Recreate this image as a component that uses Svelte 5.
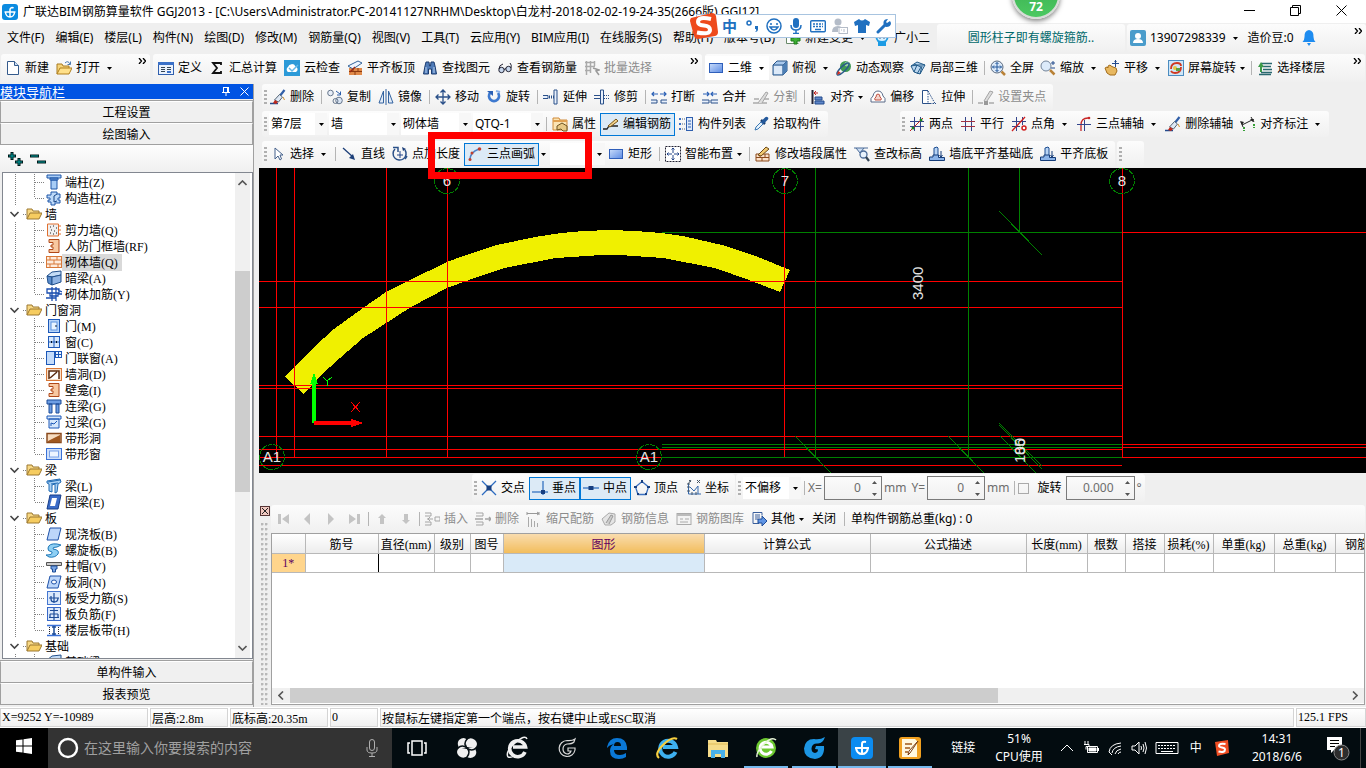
<script lang="ts">
  // 16x16 glyphs for toolbars and the component tree
  const icons: Record<string, string> = {
    app: '<rect width="16" height="16" rx="3" fill="#0b8be0"/><path d="M8 13V5.500a2 2 0 0 1 3.500-1.200M2.500 8h11M3.500 8a4.500 5 0 0 0 9 0" fill="none" stroke="#fff" stroke-width="1.500"/>',
    new: '<path d="M2.500 1.500h7l4 4v9h-11z" fill="#fff" stroke="#345a8c"/><path d="M9.500 1.500v4h4" fill="#cfe0f5" stroke="#345a8c"/>',
    open: '<path d="M1 14V4h5l1 2h6v3" fill="#f6d47a" stroke="#a87a20"/><path d="M1 14l3-6h12l-3 6z" fill="#ffe08a" stroke="#b07f1c"/><path d="M9 3q3-3 5 1M14.500 1.500V4.500H11.500" fill="none" stroke="#4878b0"/>',
    define: '<rect x=".5" y="2.500" width="15" height="12" fill="#eaf1fc" stroke="#2f5fae"/><path d="M0 2h16v3H0z" fill="#3a70c8"/><path d="M3 7.500h4M3 9.500h4M3 11.500h4M9 7.500h4M9 9.500h4" stroke="#345"/><path d="M9 11h4v2H9z" fill="#3a70c8"/>',
    sigma: '<path d="M12 5V3H4l4 5-4 5h8v-2" fill="none" stroke="#111" stroke-width="1.800"/>',
    cloud: '<rect width="16" height="16" fill="#2c9ad8"/><path d="M4 12a3 3 0 0 1 0-5 4 4 0 0 1 7.500-.5A3 3 0 0 1 12 12z" fill="#fff"/><path d="M5 8l3 3 6-6" fill="none" stroke="#63b8e8" stroke-width="1.500"/>',
    slabtop: '<path d="M2 8h13v7H2z" fill="#e08a4a"/><path d="M2 11.500h13M6 8v3M11 8v3M8 12v3" stroke="#8b3a10"/><path d="M1 6l10-5 4 2-9 6z" fill="#eef5ff" stroke="#32649b"/><path d="M3 12l5-5" stroke="#a02810" stroke-width="1.500"/>',
    find: '<path d="M3 6l1-4h3l.5 4h1L9 2h3l1 4 1.500 8h-5V9h-3v5h-5z" fill="#4f7bb8" stroke="#1c3c70"/><path d="M4 7v6M12 7v6" stroke="#b9d2f0"/>',
    glasses: '<circle cx="4.500" cy="10" r="2.700" fill="#c8d8ee" stroke="#223"/><circle cx="11.500" cy="9" r="2.700" fill="#c8d8ee" stroke="#223"/><path d="M7 9.500l2-1M2 9q0-4 4-5M14 8q1-3-1-5" fill="none" stroke="#223"/>',
    batch: '<path d="M1 2.500h9M1 6.500h10M1 10.500h6M2.500 1v14M6.500 1v12M10.500 1v5" stroke="#aaa" stroke-width="1.500"/><path d="M9 8l6 2-3 1 3 4" fill="none" stroke="#999" stroke-width="1.500"/>',
    rect: '<defs><linearGradient id="rg" x1="0" y1="0" x2="1" y2="1"><stop offset="0" stop-color="#c9dcfa"/><stop offset="1" stop-color="#5b8be4"/></linearGradient></defs><rect x="1.500" y="3.500" width="13" height="9" fill="url(#rg)" stroke="#2f5fba"/>',
    cube: '<path d="M1 5l4-4h10v10l-4 4H1z" fill="#a8c8ec" stroke="#2a5688"/><path d="M1 5h10v10M11 5l4-4" fill="none" stroke="#2a5688"/><path d="M11 5l4-4v10l-4 4z" fill="#4d7fb5"/><path d="M2 6h8v8H2z" fill="#dce9f8"/>',
    orbit: '<circle cx="9.500" cy="6.500" r="5.500" fill="#3f9a54"/><circle cx="11" cy="4" r="2.500" fill="#9ad6a0"/><ellipse cx="7" cy="9" rx="8" ry="2.500" transform="rotate(-45 7 9)" fill="none" stroke="#2a5c8c" stroke-width="1.500"/><path d="M1 15l1-4 3 2z" fill="#d83020"/>',
    local3d: '<path d="M1 6l6-4 8 3-5 9-6-2z" fill="#bcd7ef" stroke="#225a88"/><path d="M4 12l3-7 8 0M10 14l2-8M1 6l6-1M4 4l7 3-4 7" fill="none" stroke="#225a88"/>',
    fit: '<circle cx="7" cy="7" r="6" fill="#dceafa" stroke="#5a6a80"/><path d="M7 2.500v9M2.500 7h9M5.500 4L7 2.500 8.500 4M5.500 10L7 11.500 8.500 10M4 5.500L2.500 7 4 8.500M10 5.500L11.500 7 10 8.500" fill="none" stroke="#24599c"/><path d="M11.500 11.500l3.500 3.500" stroke="#b98238" stroke-width="2.500"/>',
    zoom: '<circle cx="6" cy="6" r="5" fill="#dceafa" stroke="#73849a"/><path d="M10 10l4.500 4.500" stroke="#b98238" stroke-width="2.500"/><path d="M11 3h4M13 1v4M11 8h4" stroke="#234a8c"/>',
    pan: '<path d="M1 8l2-1 1 1V6l2-1 1 1 2 1 3 1 1 3-2 4H6L3 13z" fill="#e8b860" stroke="#a36d1c"/><path d="M11.500 0v7M8 3.500h7M10.500 1.500l1-1 1 1" stroke="#234a8c"/>',
    screenrot: '<rect x=".5" y=".5" width="15" height="15" fill="#cfe6f8" stroke="#4b8cc0"/><path d="M3 9q0-6 6-6 4 0 4 3M13 7q0 6-6 6-3 0-4-2" fill="none" stroke="#d03820" stroke-width="1.800"/><circle cx="7" cy="8" r="2" fill="#e8c840"/><path d="M8 8h4v3H8z" fill="#5fa040"/>',
    floors: '<path d="M4 3.500h11M4 6.500h10M6 9.500h9M4 12.500h11M2 14.500h12" stroke="#2a6870" stroke-width="1.500"/><path d="M1 7l3-5 3 5H5v5H3V7z" fill="#3b9a48"/>',
    erase: '<path d="M0 14.500h8" stroke="#234a8c" stroke-width="1.500"/><path d="M14.500 1L9 8" stroke="#315fa8" stroke-width="2.200"/><path d="M9.500 5.500l3 2.500-4 5-4-2z" fill="#dfe8f4" stroke="#567"/><path d="M5 11l3 2-2 2-3-1z" fill="#c0281c"/><path d="M13 8l1.500 3" stroke="#d09030"/>',
    copy: '<circle cx="3.500" cy="4" r="2.800" fill="#e8eef8" stroke="#66768c"/><circle cx="12" cy="11.500" r="3.300" fill="#dbe6f4" stroke="#66768c"/><circle cx="8.500" cy="12" r="2.500" fill="none" stroke="#66768c"/><path d="M9 2l4 3M13.500 2.500V6H10" fill="none" stroke="#2b5ca8"/>',
    mirror: '<path d="M5.500 2v12H1zM10.500 2v12H15z" fill="#e3ecf8" stroke="#3363a0"/><path d="M8 0v16" stroke="#3363a0"/>',
    move: '<path d="M8 1v14M1 8h14M5.500 3.500L8 1l2.500 2.500M5.500 12.500L8 15l2.500-2.500M3.500 5.500L1 8l2.500 2.500M12.500 5.500L15 8l-2.500 2.500" fill="none" stroke="#2a5089" stroke-width="1.300"/>',
    rotate: '<path d="M4 4a5 5 0 1 0 8 0" fill="none" stroke="#3e79cf" stroke-width="2.800"/><path d="M1 2h6v5z" fill="#2b60b5"/><path d="M10 2l4 1" stroke="#8ab0e8" stroke-width="2"/>',
    extend: '<path d="M0 6.500h5v3H0M11 1h3v14h-3z" fill="#e8f0fc" stroke="#2a5089"/><path d="M6 8h5" stroke="#2a5089" stroke-dasharray="1 1" stroke-width="3"/>',
    trim: '<path d="M6.500 1h3v14h-3z" fill="#e8f0fc" stroke="#2a5089"/><path d="M0 6.500h6M0 9.500h6" stroke="#2a5089"/><path d="M10 6.500h6M10 9.500h6" stroke="#2a5089" stroke-dasharray="1 1"/>',
    break: '<path d="M0 11h6v3H0M16 11h-6v3h6" fill="#e8f0fc" stroke="#2a5089"/><path d="M1 5h6M3 3L1 5l2 2M9 5h6M13 3l2 2-2 2" fill="none" stroke="#2b60b5" stroke-width="1.200"/>',
    merge: '<path d="M0 11h7v3H0M16 11H9v3h7" fill="#e8f0fc" stroke="#2a5089"/><path d="M1 5h6M5 3l2 2-2 2M9 5h6M11 3L9 5l2 2" fill="none" stroke="#2b60b5" stroke-width="1.200"/>',
    split: '<path d="M1 10h5M10 10h6M0 14h14" stroke="#aaa" stroke-width="1.500"/><path d="M5 14l8-11 2 1-6 10" fill="#ddd" stroke="#a5a5a5"/>',
    align: '<path d="M2.500 1v14" stroke="#223" stroke-width="2"/><path d="M4 4h4M6 2L4 4l2 2" fill="none" stroke="#c02020"/><path d="M5 8h7v3H5zM5 12h9v3H5z" fill="#5f86c8" stroke="#234a8c"/>',
    offset: '<path d="M1 13q-1-4 2-6 1-5 5-5t5 5q3 2 2 6z" fill="#fff" stroke="#5a6b88"/><path d="M5 11q-1-2 1-3 0-3 2-3t2 3q2 1 1 3z" fill="#f4d4cc" stroke="#c05040"/>',
    stretch: '<path d="M7 1.500H1.500v13h8" fill="#fff" stroke="#2a5089"/><path d="M7 2l7 12.500M7 2v12M9 14.500h6" fill="none" stroke="#2a5089" stroke-dasharray="1.500 1"/>',
    clamp: '<path d="M0 14h5M11 14h5" stroke="#aaa" stroke-width="1.500"/><path d="M6 12L12 2l3 1-6 9" fill="#ddd" stroke="#a5a5a5"/><path d="M6 12h4v4H6z" fill="#999"/>',
    props: '<path d="M1 2h6l1 2h7v10H1z" fill="#fbe4b4" stroke="#d08a38"/><path d="M1 5h14" stroke="#e0a050" stroke-width="2"/><path d="M5 10l5-3 5 3v5h-4l-2-2-4 1z" fill="#e8c884" stroke="#6d5320"/>',
    editbar: '<path d="M0 13h4l2-3h9" fill="none" stroke="#222" stroke-width="1.300"/><path d="M5 10l8-7 2 2-8 6z" fill="#f2d28c" stroke="#775518"/>',
    list: '<path d="M1 2h2v2H1zM1 7h2v2H1zM1 12h2v2H1z" fill="#3a70c8"/><path d="M4 3h3M4 8h3M4 13h3" stroke="#567" stroke-dasharray="1 1"/><rect x="8.500" y="1.500" width="6" height="13" fill="#dfeafa" stroke="#2f5fae"/><path d="M10 5h3M10 8h3M10 11h3" stroke="#2f5fae"/>',
    pick: '<path d="M2 14l1-3 6-6 2 2-6 6z" fill="#e6f2fc" stroke="#3b78b4"/><path d="M8 4l4 4" stroke="#173a68" stroke-width="2.500"/><path d="M10 6l3.500-3.500" stroke="#24599c" stroke-width="3.500" stroke-linecap="round"/>',
    twopt: '<path d="M5.500 1v14M11.500 1v14M1 5.500h14M1 10.500h14" stroke="#33458c"/><path d="M1 15L14 2" stroke="#c02020"/><circle cx="4" cy="12" r="1.500" fill="#208020"/><circle cx="12" cy="4" r="1.500" fill="#208020"/>',
    parallel: '<path d="M5.500 1v14M11.500 1v14" stroke="#33458c"/><path d="M1 5.500h14M1 10.500h14" stroke="#a03040"/>',
    ptangle: '<path d="M5.500 1v14M11.500 1v8M1 5.500h14M1 10.500h8" stroke="#33458c"/><path d="M1 15L14 1" stroke="#d02020" stroke-width="1.300"/><circle cx="13" cy="12" r="2" fill="#fff" stroke="#d02020" stroke-width="1.500"/>',
    arcaxis: '<path d="M5 15V9q0-7 7-7" fill="none" stroke="#c82828" stroke-width="1.300"/><path d="M8.500 4v11M1 8.500h14" stroke="#33458c"/><circle cx="13" cy="2" r="1.300" fill="#c82828"/>',
    dim: '<path d="M2 9l10-5M1 6l2 5M11 1l3 5" fill="none" stroke="#222"/><path d="M0 5l4 1-2 3zM10 3l4 0-1 3z" fill="#222"/><path d="M4 11v4M14 8v4" stroke="#38a038" stroke-width="2" stroke-dasharray="2 1"/>',
    cursor: '<path d="M5 2v11l3-3 2 4 1.500-1L10 9h3z" fill="#fff" stroke="#45618c"/>',
    line: '<path d="M2 2l10 9" stroke="#1d3f78" stroke-width="1.300"/><path d="M14 14l-6-2 4-4z" fill="#1d3f78"/>',
    ptlen: '<path d="M3 3a6.500 6.500 0 1 0 10 1" fill="none" stroke="#2a5089" stroke-width="1.500"/><path d="M1 1.500h5V6M13 13l2-3" fill="none" stroke="#2a5089" stroke-width="1.500"/><path d="M8 5v7M5 9h6" stroke="#24468a"/><path d="M10 1l4 2-3 2z" fill="#1d3f78"/>',
    arc3: '<path d="M3 14Q3 6 12 3" fill="none" stroke="#4d82c8" stroke-width="1.600"/><circle cx="3" cy="13.500" r="1.500" fill="#c04030"/><circle cx="5" cy="7" r="1.500" fill="#c04030"/><circle cx="12.500" cy="3" r="1.800" fill="#c04030"/>',
    smart: '<rect x=".5" y=".5" width="15" height="15" fill="#fff" stroke="#223" stroke-dasharray="2 1"/><path d="M8 2v5M8 9v5M2 8h5M9 8h5M6.500 3.500L8 2l1.500 1.500M6.500 12.500L8 14l1.500-1.500M3.500 6.500L2 8l1.500 1.500M12.500 6.500L14 8l-1.500 1.500" fill="none" stroke="#24468a"/>',
    modwall: '<path d="M1 8h13v7H1z" fill="#fbe0c8" stroke="#8c4a1c"/><path d="M1 11.500h13M5 8v3M10 8v3M7 12v3" stroke="#8c4a1c"/><path d="M3 9L11 1l3 2-8 7z" fill="#f0c870" stroke="#6f4a18"/>',
    checkh: '<path d="M0 2h14M2 2l4 5 4-5" fill="#cfe0f5" stroke="#4b6b98"/><circle cx="9.500" cy="8.500" r="3.500" fill="#e8f2fc" stroke="#4b6b98" stroke-width="1.300"/><path d="M12 11l3 4" stroke="#345" stroke-width="2.200"/>',
    wallbase: '<path d="M5 2l3-1 1 1v8H5z" fill="#b8d4f4" stroke="#1c4c90"/><path d="M.5 14.500h15v-3h-6V9H4v2H.5z" fill="#8cb4e8" stroke="#153c78"/><path d="M12 5v6M10.500 9L12 11l1.500-2" fill="none" stroke="#153c78"/>',
    cross: '<path d="M1 1l14 14M15 1L1 15" stroke="#2d6cc0" stroke-width="1.300"/><path d="M5.500 5.500h5v5h-5z" fill="#173f80"/>',
    perp: '<path d="M0 12h16M11 1v14" stroke="#4b82c8" stroke-width="1.500"/><path d="M9 10h4v4H9z" fill="#173f80"/>',
    mid: '<path d="M0 8h16" stroke="#4b82c8" stroke-width="1.500"/><path d="M5.500 6h5v4h-5z" fill="#173f80"/>',
    vertex: '<path d="M8 1.500L14.500 7l-2.500 7.500H4L1.500 7z" fill="none" stroke="#3a70c0" stroke-width="1.300"/><path d="M7 0h2v3H7zM0 6h3v2H0zM13 6h3v2h-3zM3 13h2v2H3zM11 13h2v2h-2z" fill="#173f80"/>',
    coord: '<path d="M3.500 4v10H16M5 7l4 4 4-5v8" fill="none" stroke="#3468ac"/><path d="M2 4h3M2 7h3M2 11h3M7 12v3M11 12v3M4 0l2 2M6 0L3 4M12 0l3 3M15 0l-3 3" fill="none" stroke="#456"/>',
    first: '<path d="M3 3h3v10H3zM14 3v10L7 8z" fill="#c4c4c4"/>',
    prev: '<path d="M11 2v12L5 8z" fill="#c4c4c4"/>',
    next: '<path d="M5 2v12l6-6z" fill="#c4c4c4"/>',
    last: '<path d="M10 3h3v10h-3zM2 3v10l7-5z" fill="#c4c4c4"/>',
    up: '<path d="M8 3l4 4h-2v6H6V7H4z" fill="#c4c4c4"/>',
    down: '<path d="M8 13l4-4h-2V3H6v6H4z" fill="#c4c4c4"/>',
    insert: '<path d="M1 2h6v3H1M1 11h6v3H1" fill="none" stroke="#a5a5a5"/><path d="M3 8h6M11 6h5v4h-5zM6 6L4 8l2 2" fill="none" stroke="#a5a5a5"/>',
    remove: '<path d="M1 2h7v3H1M1 11h7v3H1" fill="none" stroke="#a5a5a5"/><path d="M0 8h8M10 8h6M14 6l2 2-2 2" fill="none" stroke="#a5a5a5" stroke-width="1.500"/>',
    scale: '<path d="M1 1v3M1 2.500h12M13 1v3M11 1l2 1.500L11 4" fill="none" stroke="#999"/><path d="M2.500 6v10M5.500 8v8M8.500 10v6M11.500 12v4" stroke="#aaa"/>',
    info: '<path d="M1 8l7-6 6 1v8l-4 3H4z" fill="#e4e4e4" stroke="#aaa"/><path d="M5 12l5-8 2 1-4 8" fill="#ccc" stroke="#999"/>',
    lib: '<rect x="1" y="2.500" width="14" height="11" fill="#f3f3f3" stroke="#aaa"/><path d="M1 4h14" stroke="#bbb" stroke-width="2"/><path d="M4 8h3M4 11h8M9 8h4" stroke="#aaa"/>',
    other: '<path d="M2 1.500h9v3M2 1.500v11h6" fill="none" stroke="#3a5f9c"/><path d="M4 4h5M4 6h5M4 8h3" stroke="#3a5f9c"/><path d="M7 8h4V5l5 5-5 5v-3H7z" fill="#5f94e4" stroke="#1f4c98"/>',
    newchg: '<path d="M4 3.500H1.500v10h12" fill="#fff" stroke="#6a8a6a"/><path d="M9 5h3v3h3v3h-3v3H9v-3H6V8h3z" fill="#3cb034" stroke="#1c7a18"/>',
    robot: '<circle cx="8" cy="7" r="6.500" fill="#1c9be4"/><path d="M4 12h8v4H4z" fill="#1c9be4"/><ellipse cx="8" cy="8" rx="4.500" ry="3" fill="#d6f0ff"/><path d="M5.500 8h1M9.500 8h1" stroke="#136" stroke-width="1.500"/>',
    user: '<rect width="16" height="16" rx="2" fill="#4a9ccb"/><circle cx="8" cy="6" r="3" fill="#fff"/><path d="M3 13q0-4 5-4t5 4z" fill="#fff"/>',
    bell: '<path d="M8 0q5 1 4.500 7 0 3 2 5h-13q2-2 2-5Q3 1 8 0z" fill="#1e8cf0"/><path d="M6 13h4l-2 3z" fill="#1e8cf0"/>',
    folder: '<path d="M1 13V3h5l1 2h6v3" fill="#f8d884" stroke="#9c7830"/><path d="M1 13l3-6h12l-3 6z" fill="#f6cc60" stroke="#9c7830"/>',
    column: '<path d="M1 1h14v3H1zM4 4h8v2H4zM5 6h6v9H5z" fill="#a8cdf6" stroke="#1e56a8"/>',
    tiecol: '<path d="M5 2h6v2h3v4h-2v2h2v3H9v2H5v-3H2v-2h2V8H1V5h4z" fill="#bcd8f8" stroke="#1e56a8"/><path d="M11 4l-3 2v6l3-1" fill="none" stroke="#174484"/>',
    shear: '<path d="M1.500 2h11v12h-11z" fill="#f0f0f0" stroke="#e07030"/><path d="M4 5h1M7 4h1M10 6h1M5 8h1M8 9h1M4 11h1M7 12h1M10 11h1" stroke="#222"/><path d="M12 4h3M12 8h3M12 12h3" stroke="#e07030"/>',
    niche: '<path d="M3 1.500h10v13H3v-3h4V9H5V7h2V4.500H3z" fill="#f8c8a0" stroke="#b04818"/>',
    brick: '<rect x=".5" y="2.500" width="15" height="11" fill="#fdebdc" stroke="#d87838"/><path d="M0 6h16M0 10h16M4 2v4M11 2v4M8 6v4M4 10v4M12 10v4" stroke="#d87838"/>',
    hiddenbeam: '<path d="M1 6l5-4 9-1v4l-9 2z" fill="#c4dcf6" stroke="#21508c"/><path d="M1 6l5 1v8l-4-2z" fill="#5a8ccc" stroke="#21508c"/><path d="M6 7l9-2v7l-9 3z" fill="#8fb4e4" stroke="#21508c"/>',
    rebar: '<path d="M1 3h12v4H1zM4 7h8v3H4zM6 1v14M10 1v14M0 12h10M12 4l4 2M12 8h4" fill="none" stroke="#1c4fb0" stroke-width="1.300"/>',
    door: '<rect x="2.500" y="1.500" width="11" height="13" fill="#b9d5f8" stroke="#1c58b8"/><rect x="5" y="4" width="6" height="8" fill="#eaf4ff" stroke="#5b92e0"/><path d="M10 7v2" stroke="#123"/>',
    window: '<rect x="2.500" y="2.500" width="11" height="11" fill="#d8e9fd" stroke="#1c58b8"/><path d="M8 2v12M2 8h12" stroke="#1c58b8"/><path d="M5 8h1M10 8h1" stroke="#012" stroke-width="2"/>',
    doorwin: '<rect x=".5" y="1.500" width="8" height="13" fill="#c4dcfa" stroke="#1c58b8"/><rect x="9.500" y="1.500" width="6" height="6" fill="#eaf4ff" stroke="#1c58b8"/><path d="M12.500 1v7M9 4.500h7" stroke="#1c58b8"/>',
    hole: '<rect x=".5" y="2.500" width="15" height="12" fill="#fbe0c8" stroke="#d87838"/><path d="M3 13V5h10v8M4 12l7-6" fill="#fff" stroke="#5c2c10" stroke-width="1.500"/>',
    linkbeam: '<path d="M1 2h14v4H1zM3 6h3v9H3zM10 6h3v9h-3z" fill="#6d9ee4" stroke="#1c4c98"/>',
    lintel: '<path d="M1 2h14v3H1zM3 5h10v9H3z" fill="#d6e8fc" stroke="#1c58b8"/><path d="M5 12V9l3 1 3-3" fill="none" stroke="#1c58b8"/>',
    striphole: '<rect x="1" y="3.500" width="14" height="9" fill="#f6dcc0" stroke="#8a4a1c" stroke-width="1.500"/><path d="M2 11l12-6v7H2z" fill="#a05820"/>',
    stripwin: '<rect x=".5" y="2.500" width="15" height="11" fill="#cfe0fa" stroke="#3b72d8"/><rect x="3.500" y="5" width="9" height="6" fill="#eef5ff" stroke="#7aa2e8"/>',
    beam: '<path d="M1 3l13-2 1 3-3 2-1 8-2 1V6l-3 1v7l-3-1V6L1 5z" fill="#a8d0f4" stroke="#1f6ab4"/><path d="M2 4l12-2M5 6l7-1" stroke="#1f6ab4"/>',
    ring: '<path d="M4 1h11l-3 14H1z" fill="#3b6cc8" stroke="#153c88"/><path d="M6 4h5l-2 8H4z" fill="#fff"/>',
    slab: '<path d="M4 2h11l-3 12H1z" fill="#bcd6fa" stroke="#1c50a8"/>',
    spiral: '<path d="M2 6q1-5 9-4l4 1-4 2q-5 0-4 2 7 1 5 5-3 4-9 3l-3-2q7 0 6-3-5-1-4-4z" fill="#8fd0f4" stroke="#2078b8"/>',
    cap: '<path d="M.5 4.500h15v3H.500z" fill="#ccc" stroke="#555"/><path d="M5 8h6v3H9.500v3h-3v-3H5z" fill="#7aa6e4" stroke="#1c4c98"/>',
    slabhole: '<path d="M4 2h11l-3 12H1z" fill="#bcd6fa" stroke="#1c50a8"/><ellipse cx="8" cy="8" rx="2.500" ry="2" fill="#fff" stroke="#1c50a8"/>',
    force: '<rect x="1.500" y="1.500" width="13" height="13" fill="#dbe9fc" stroke="#4577d0"/><path d="M8 3v10M3 8h10M5 6v3q0 3 3 3 4 0 4-4" fill="none" stroke="#1c4c98" stroke-width="1.200"/>',
    neg: '<rect x="1.500" y="1.500" width="13" height="13" fill="#dbe9fc" stroke="#3868c8"/><path d="M4 4.500h8M4 8h8M3 11.500h10M8 2v12M4 8v3M12 8v3" stroke="#1c4c98" stroke-width="1.200"/>',
    band: '<path d="M1 3.500h14M1 13.500h14" stroke="#3b72d8" stroke-width="1.500"/><path d="M8 4v9M6 5h4M6 12h4" stroke="#1c4c98" stroke-width="1.500"/><path d="M3.500 5v8M12.500 5v8" stroke="#223" stroke-dasharray="1 1"/>',
  };

  const menus = ["文件(F)", "编辑(E)", "楼层(L)", "构件(N)", "绘图(D)", "修改(M)", "钢筋量(Q)", "视图(V)", "工具(T)", "云应用(Y)", "BIM应用(I)", "在线服务(S)", "帮助(H)", "版本号(B)"];

  // icon:label:flags, "|" is a separator
  const fileBar = ["new:新建", "open:打开:split"];
  const mainBar = ["define:定义", "sigma:汇总计算", "cloud:云检查", "slabtop:平齐板顶", "find:查找图元", "glasses:查看钢筋量", "batch:批量选择:off"];
  const viewBar = ["rect:二维:split field", "cube:俯视:split", "orbit:动态观察", "local3d:局部三维", "|", "fit:全屏", "zoom:缩放:split", "pan:平移:split", "screenrot:屏幕旋转:menu", "|", "floors:选择楼层"];
  const editBar = ["erase:删除", "|", "copy:复制", "mirror:镜像", "|", "move:移动", "rotate:旋转", "|", "extend:延伸", "trim:修剪", "|", "break:打断", "merge:合并", "split:分割:off", "|", "align:对齐:menu", "offset:偏移", "stretch:拉伸", "|", "clamp:设置夹点:off"];
  const partBar = ["|", "props:属性", "editbar:编辑钢筋:on", "list:构件列表", "pick:拾取构件"];
  const axisBar = ["twopt:两点", "parallel:平行", "ptangle:点角:split", "arcaxis:三点辅轴:split", "erase:删除辅轴", "dim:对齐标注:split"];
  const drawBar = ["cursor:选择:split", "|", "line:直线", "ptlen:点加长度", "arc3:三点画弧:on"];
  const wallBar = ["rect:矩形", "|", "smart:智能布置:menu", "|", "modwall:修改墙段属性", "checkh:查改标高", "wallbase:墙底平齐基础底", "wallbase:平齐底板"];
  const snapBar = ["cross:交点", "perp:垂点:on", "mid:中点:on", "vertex:顶点", "coord:坐标"];
  const rowBar = ["first::off", "prev::off", "next::off", "last::off", "|", "up::off", "down::off", "|", "insert:插入:off", "remove:删除:off", "scale:缩尺配筋:off", "info:钢筋信息:off", "lib:钢筋图库:off", "other:其他:menu"];

  // level, icon, name, shortcut
  const tree: [number, string, string, string][] = [
    [2, "column", "端柱", "(Z)"],
    [2, "tiecol", "构造柱", "(Z)"],
    [1, "folder", "墙", ""],
    [2, "shear", "剪力墙", "(Q)"],
    [2, "niche", "人防门框墙", "(RF)"],
    [2, "brick", "砌体墙", "(Q)"],
    [2, "hiddenbeam", "暗梁", "(A)"],
    [2, "rebar", "砌体加筋", "(Y)"],
    [1, "folder", "门窗洞", ""],
    [2, "door", "门", "(M)"],
    [2, "window", "窗", "(C)"],
    [2, "doorwin", "门联窗", "(A)"],
    [2, "hole", "墙洞", "(D)"],
    [2, "niche", "壁龛", "(I)"],
    [2, "linkbeam", "连梁", "(G)"],
    [2, "lintel", "过梁", "(G)"],
    [2, "striphole", "带形洞", ""],
    [2, "stripwin", "带形窗", ""],
    [1, "folder", "梁", ""],
    [2, "beam", "梁", "(L)"],
    [2, "ring", "圈梁", "(E)"],
    [1, "folder", "板", ""],
    [2, "slab", "现浇板", "(B)"],
    [2, "spiral", "螺旋板", "(B)"],
    [2, "cap", "柱帽", "(V)"],
    [2, "slabhole", "板洞", "(N)"],
    [2, "force", "板受力筋", "(S)"],
    [2, "neg", "板负筋", "(F)"],
    [2, "band", "楼层板带", "(H)"],
    [1, "folder", "基础", ""],
    [2, "hiddenbeam", "基础梁", "(J)"],
  ];

  const columns: [string, string, number][] = [
    ["筋号", "", 73],
    ["直径", "(mm)", 56],
    ["级别", "", 36],
    ["图号", "", 33],
    ["图形", "", 201],
    ["计算公式", "", 166],
    ["公式描述", "", 156],
    ["长度", "(mm)", 61],
    ["根数", "", 38],
    ["搭接", "", 39],
    ["损耗", "(%)", 49],
    ["单重", "(kg)", 61],
    ["总重", "(kg)", 61],
    ["钢筋归类", "", 68],
  ];

  const redX = [276, 294, 386, 447, 784];
  const redY = [281, 307, 385, 388, 436, 449, 457, 465];
  const greenY = [232, 444, 447, 457];
  const ticks = [
    [999, 211, 1042, 255],
    [795, 436, 831, 473],
    [948, 436, 984, 473],
    [999, 423, 1042, 466],
    [999, 425, 1042, 469],
    [1000, 436, 1036, 473],
  ];
  const bubbles: [number, number, string][] = [
    [272, 457, "A1"],
    [649, 457, "A1"],
    [447, 181, "6"],
    [785, 181, "7"],
    [1122, 181, "8"],
  ];

  // 24x24 taskbar icons
  const pinned: [string, string][] = [
    ["任务视图", '<rect x="7" y="5" width="10" height="14" fill="none" stroke="#fff" stroke-width="1.500"/><path d="M5 7H3v10h2M19 7h2v10h-2" fill="none" stroke="#fff" stroke-width="1.500"/>'],
    ["助手", '<path d="M11 12L5 13Q1 8 4 4q5-4 8 0zM12 11l-1-6q4-5 9-1 4 4 0 8zM13 12l6-1q4 5 1 9-5 4-9 0zM12 13l1 6q-4 5-9 1-4-4 0-8z" fill="#f0f0f0"/><path d="M12 3q-4 5 0 9 4 4 0 9M3 12q4-4 9 0 5 4 9 0" fill="none" stroke="#071014" stroke-width="1.500"/>'],
    ["浏览器", '<path d="M20 16a8 8 0 1 1 .5-5H8" fill="none" stroke="#f0f0f0" stroke-width="3.600"/><path d="M3 21Q0 16 10 7T22 3M3 21q3 1 6-1" fill="none" stroke="#f0f0f0" stroke-width="1.500"/>'],
    ["广联达", '<path d="M20 3q-3 2-8 1.500a8 8 0 1 0 8 9.500v-2h-7v3h3q-1 3-4 3-4-1-4-5 0-4 4-5 5 0 7-2z" fill="none" stroke="#d8d8d8" stroke-width="1.200"/>'],
    ["Edge", '<path d="M2 11Q4 2 12 2q9 0 10 9v3H9q0 5 6 5 3 0 6-2v4q-3 2-7 2-9 0-9-8 0-5 4-7-5 1-7 4zM9 10h7q0-4-3.500-4T9 10z" fill="#0a78d7"/>'],
    ["Internet Explorer", '<path d="M20.500 16a8 8 0 1 1 .5-5H8" fill="none" stroke="#3db0f0" stroke-width="4"/><path d="M4 22Q-1 18 8 9T22 3" fill="none" stroke="#f8d040" stroke-width="2.200"/>'],
  ];
  const running: [string, string, string][] = [
    ["", "资源管理器", '<path d="M2 4h8l1 2h11v15H2z" fill="#f6dc8a"/><path d="M2 8h20" stroke="#e0bc58"/><path d="M5 14h14v8h-4v-4H9v4H5z" fill="#48b0ea"/>'],
    ["run", "绿色浏览器", '<circle cx="12" cy="12" r="10" fill="#6cc830"/><path d="M17.500 15a6 6 0 1 1 .5-4H8" fill="none" stroke="#fff" stroke-width="3"/><path d="M3 21Q2 16 10 8T22 4" fill="none" stroke="#e8f6d8" stroke-width="1.500"/>'],
    ["run", "广联达云", '<path d="M23 1q-2 6-7 6.500-6-.5-6.500 5 0 4 3.500 4.500 3-.5 3-3.500l-3-.5 1-3h8q1 12-9 13Q2 22 2 12.500 3 3 12 3q6 1 11-2z" fill="#1c96e4"/>'],
    ["run active", "广联达钢筋", '<rect x="1" y="1" width="22" height="22" rx="4" fill="#0c8cf0"/><path d="M12 19V8q0-3 4-2M5 12h14M6 12q1 6 6 6t6-6" fill="none" stroke="#fff" stroke-width="2"/>'],
    ["run", "记事", '<rect x="1" y="1" width="22" height="22" rx="3" fill="#f0a020"/><path d="M4 3h13l2 2v16H4z" fill="#fff8e0"/><path d="M7 8h7M7 12h5M7 16h3" stroke="#a05818" stroke-width="1.500"/><path d="M20 5l-8 12-2 2 1-4z" fill="#fff" stroke="#7a3c10"/>'],
  ];
</script>

{#snippet glyph(name: string)}
  <svg class="icon" viewBox="0 0 16 16" aria-hidden="true">{@html icons[name]}</svg>
{/snippet}

{#snippet caret()}
  <svg class="caret" viewBox="0 0 5 3" aria-hidden="true"><path d="M0 0h5L2.500 3z" /></svg>
{/snippet}

{#snippet tools(items: string[])}
  {#each items as item}
    {#if item === "|"}
      <span class="sep"></span>
    {:else}
      {@const [icon, label, flags = ""] = item.split(":")}
      <button class="tool {flags}" aria-label={label || icon}>
        {@render glyph(icon)}
        {#if label}<span>{label}</span>{/if}
        {#if flags.includes("split") || flags.includes("menu")}{@render caret()}{/if}
      </button>
    {/if}
  {/each}
{/snippet}

{#snippet combo(label: string, value: string, size: string)}
  <label class="combo {size}">
    <select aria-label={label}><option>{value}</option></select>
    <span class="drop">{@render caret()}</span>
  </label>
{/snippet}

{#snippet more()}
  <button class="more" aria-label="更多">
    <svg viewBox="0 0 8 6" width="8" height="6"><path d="M1 0l2.500 3L1 6M5 0l2.500 3L5 6" /></svg>
  </button>
{/snippet}

{#snippet spin(label: string, value: string, size: string)}
  <span class="spin {size}">
    <input aria-label={label} {value} />
    <svg viewBox="0 0 7 17" width="7" height="17"><path d="M1 4l2.500-3L6 4zM1 13l2.500 3L6 13z" /></svg>
  </span>
{/snippet}

<div class="window">
  <header class="titlebar">
    {@render glyph("app")}
    <h1>广联达BIM钢筋算量软件 GGJ2013 - [C:\Users\Administrator.PC-20141127NRHM\Desktop\白龙村-2018-02-02-19-24-35(2666版).GGJ12]</h1>
    <div class="winbtns">
      <button aria-label="最小化"><svg viewBox="0 0 11 11"><path d="M0 5.500h11" /></svg></button>
      <button aria-label="还原"><svg viewBox="0 0 11 11"><path d="M.5 2.500h8v8h-8zM2.500 2V.5h8v8H9" /></svg></button>
      <button aria-label="关闭"><svg viewBox="0 0 11 11"><path d="M.5.5l10 10M10.500.5l-10 10" /></svg></button>
    </div>
  </header>

  <nav class="menubar">
    <div class="menus">
      {#each menus as menu}
        <button class="plain">{menu}</button>
      {/each}
    </div>
    <button class="tool split">{@render glyph("newchg")}<span>新建变更</span>{@render caret()}</button>
    <button class="tool">{@render glyph("robot")}<span>广小二</span></button>
    <div class="group tip"><a href="#tip">圆形柱子即有螺旋箍筋..</a></div>
    <div class="group account">
      <button class="tool split">{@render glyph("user")}<span>13907298339</span>{@render caret()}</button>
      <button class="plain">造价豆:0</button>
      <button class="tool" aria-label="通知">{@render glyph("bell")}</button>
      {@render more()}
    </div>
  </nav>

  <div class="bar top">
    <div class="group file">{@render tools(fileBar)}{@render more()}</div>
    <div class="group main">{@render tools(mainBar)}{@render more()}</div>
    <div class="group view">{@render tools(viewBar)}{@render more()}</div>
  </div>

  <div class="body">
    <aside>
      <div class="panel-title">
        <h2>模块导航栏</h2>
        <svg viewBox="0 0 8 9" width="8" height="9"><path d="M1.500 0v5M0 5.500h8M6.500 0v5M1 .5h6M5.500 0v5M4 6v3" /></svg>
        <svg viewBox="0 0 9 9" width="9" height="9"><path d="M.5.5l8 8M8.500.5l-8 8" /></svg>
      </div>
      <button class="section">工程设置</button>
      <button class="section">绘图输入</button>
      <div class="expanders">
        <button aria-label="全部展开"><svg viewBox="0 0 17 16" width="17" height="16"><path class="edge" d="M5 1v8M1 5h8M12 7v8M8 11h8" /><path class="fill" d="M5 2v6M2 5h6M12 8v6M9 11h6" /></svg></button>
        <button aria-label="全部折叠"><svg viewBox="0 0 17 16" width="17" height="16"><path class="edge" d="M0 5h9M7 11h9" /><path class="fill" d="M1 5h7M8 11h7" /></svg></button>
      </div>
      <div class="treebox">
        <ul>
          {#each tree as [level, icon, name, key], i}
            <li>
              <svg class="rails" class:leaf={level === 2} viewBox="0 0 {level === 2 ? 43 : 23} 16">
                {#if level === 2}
                  <path class="dots" d="M12.500 0v16" />
                  <path class="dots" d="M31.500 0v{tree[i + 1]?.[0] === 1 ? 8 : 16}M32 8.500h10" />
                {:else}
                  <path class="dots" d="M20 8.500h3" />
                  <path class="chev" d="M7.500 6l4 4 4-4" />
                {/if}
              </svg>
              {@render glyph(icon)}
              <span class="name" class:selected={name === "砌体墙"}>{name}<span class="song">{key}</span></span>
            </li>
          {/each}
        </ul>
        <div class="vscroll">
          <svg viewBox="0 0 9 6" width="9" height="6"><path d="M.5 5l4-4 4 4" /></svg>
          <span class="thumb"></span>
          <svg viewBox="0 0 9 6" width="9" height="6"><path d="M.5 1l4 4 4-4" /></svg>
        </div>
      </div>
      <button class="section">单构件输入</button>
      <button class="section">报表预览</button>
    </aside>

    <main>
      <div class="bar edit">
        <div class="group"><span class="grip"></span>{@render tools(editBar)}</div>
      </div>
      <div class="bar part">
        <div class="group">
          <span class="grip"></span>
          {@render combo("楼层", "第7层", "c58")}
          {@render combo("构件类型", "墙", "c70")}
          {@render combo("墙类型", "砌体墙", "c70")}
          {@render combo("构件", "QTQ-1", "c70")}
          {@render tools(partBar)}
        </div>
        <div class="group axis"><span class="grip"></span>{@render tools(axisBar)}</div>
      </div>
      <div class="bar draw">
        <div class="group">
          <span class="grip"></span>
          {@render tools(drawBar)}
          <button class="arcmenu" aria-label="画弧方式">{@render caret()}</button>
          {@render combo("半径", "", "c55")}
          {@render tools(wallBar)}
        </div>
        <div class="group stub"><span class="grip"></span></div>
      </div>

      <svg class="cad" viewBox="259 168 1107 305" preserveAspectRatio="xMinYMin slice" role="img" aria-label="绘图区">
        <polygon
          class="wall"
          points="285,377 313,348 334,329 363,308 386,292 408,281 447,262 463,256 497,245 535,237 561,233 583,231 610,230 636,231 661,233 683,236 722,245 753,255 790,270 780,292 749,280 715,268 663,258 620,255 601,255 556,258 504,268 469,280 447,288 411,307 363,338 340,358 320,376 304,394"
        />
        <g class="green">
          {#each greenY as y}<line x1="662" y1={y + 0.5} x2="1123" y2={y + 0.5} />{/each}
        </g>
        <g class="red">
          {#each redX as x}<line x1={x + 0.5} y1="168" x2={x + 0.5} y2="457" />{/each}
          {#each redY as y}<line x1="259" y1={y + 0.5} x2={y === 457 ? 662 : 1122} y2={y + 0.5} />{/each}
          {#each greenY as y}<line x1="1123" y1={y + 0.5} x2="1366" y2={y + 0.5} />{/each}
          <line x1="1122.500" y1="168" x2="1122.500" y2="458" />
        </g>
        <g class="green">
          <line x1="815.500" y1="168" x2="815.500" y2="457" />
          <line x1="968.500" y1="168" x2="968.500" y2="457" />
          <line x1="1019.500" y1="168" x2="1019.500" y2="232" />
          {#each ticks as [x1, y1, x2, y2]}<line {x1} {y1} {x2} {y2} />{/each}
          {#each bubbles as [x, y]}<circle cx={x} cy={y} r="12.500" stroke-dasharray="5 1" />{/each}
        </g>
        {#each bubbles as [x, y, label]}
          <text {x} y={y + 5} text-anchor="middle">{label}</text>
        {/each}
        <text transform="translate(923 300) rotate(-90)">3400</text>
        <text transform="translate(1025 463) rotate(-90)">100</text>
        <text transform="translate(1025 455) rotate(-90)">85</text>
        <path class="yaxis" d="M312 423V384h-2l4-11 4 11h-2v39z" />
        <path class="xaxis" d="M314 421h37v-2l13 4-13 4v-2h-37z" />
        <path class="ymark" d="M323 377l4 4 5-4M327.500 381v5" />
        <path class="xmark" d="M351 402l9 10M360 402l-9 10" />
      </svg>

      <div class="bar snap">
        <div class="group"><span class="grip"></span>{@render tools(snapBar)}</div>
        <div class="group">
          <span class="grip"></span>
          {@render combo("偏移方式", "不偏移", "c58")}
          <span class="sep"></span>
          <span class="unit">X=</span>{@render spin("X", "0", "")}<span class="unit">mm</span>
          <span class="unit gap">Y=</span>{@render spin("Y", "0", "")}<span class="unit">mm</span>
          <span class="sep"></span>
          <input type="checkbox" id="turn" /><label for="turn">旋转</label>
          {@render spin("角度", "0.000", "wide")}<span class="unit">°</span>
        </div>
      </div>

      <section class="editor">
        <div class="strip">
          <button aria-label="关闭面板"><svg viewBox="0 0 10 10" width="10" height="10"><rect x=".5" y=".5" width="9" height="9" /><path d="M2 2l6 6M8 2L2 8" /></svg></button>
          <span class="dotgrid"></span>
        </div>
        <div class="sheet">
          <div class="group rowtools">
            {@render tools(rowBar)}
            <button class="plain">关闭</button>
            <span class="sep"></span>
            <span class="total">单构件钢筋总重(kg) : 0</span>
          </div>
          <div class="grid">
            <table>
              <colgroup>
                <col class="rowno" />
                {#each columns as [, , w]}<col style="width: {w}px" />{/each}
              </colgroup>
              <thead>
                <tr>
                  <th></th>
                  {#each columns as [name, unit]}
                    <th class:current={name === "图形"}>{name}<span class="song">{unit}</span></th>
                  {/each}
                </tr>
              </thead>
              <tbody>
                <tr>
                  <th class="mark song">1*</th>
                  {#each columns as [name]}
                    <td class:current={name === "图形"} class:cursor={name === "筋号"}></td>
                  {/each}
                </tr>
              </tbody>
            </table>
            <div class="hscroll">
              <svg viewBox="0 0 6 9" width="6" height="9"><path d="M5 .5l-4 4 4 4" /></svg>
              <span class="track"><span class="thumb"></span></span>
              <svg viewBox="0 0 6 9" width="6" height="9"><path d="M1 .5l4 4-4 4" /></svg>
            </div>
          </div>
        </div>
      </section>
    </main>
  </div>

  <footer class="status">
    <span class="s148 song">X=9252 Y=-10989</span>
    <span class="s80">层高<span class="song">:2.8m</span></span>
    <span class="s98">底标高<span class="song">:20.35m</span></span>
    <span class="s50 song">0</span>
    <span class="hint">按鼠标左键指定第一个端点，按右键中止或<span class="song">ESC</span>取消</span>
    <span class="s70 song">125.1 FPS</span>
  </footer>

  <div class="taskbar">
    <button class="start" aria-label="开始">
      <svg viewBox="0 0 16 16" width="16" height="16"><path d="M0 2.300L6.500 1.400V7.500H0zM7.500 1.200L16 0V7.500H7.500zM0 8.500H6.500V14.600L0 13.700zM7.500 8.500H16V16L7.500 14.800z" fill="#fff" /></svg>
    </button>
    <label class="search">
      <svg viewBox="0 0 22 22" width="22" height="22"><circle cx="11" cy="11" r="9" /></svg>
      <input placeholder="在这里输入你要搜索的内容" aria-label="搜索" />
      <svg class="mic" viewBox="0 0 12 18" width="12" height="18"><rect x="3.500" y=".5" width="5" height="11" rx="2.500" /><path d="M1 8v3q0 3 5 3t5-3V8M6 14v3M3 17.500h6" /></svg>
    </label>
    {#each pinned as [name, art]}
      <button class="pin" aria-label={name}><svg viewBox="0 0 24 24">{@html art}</svg></button>
    {/each}
    <div class="running">
      {#each running as [state, name, art]}
        <button class="task {state}" aria-label={name}><svg viewBox="0 0 24 24">{@html art}</svg></button>
      {/each}
    </div>
    <div class="tray">
      <span class="links">链接</span>
      <span class="pair cpu"><span>51%</span><span>CPU使用</span></span>
      <svg viewBox="0 0 16 16" width="16" height="16"><path d="M2 11l6-6 6 6" /></svg>
      <svg viewBox="0 0 16 16" width="16" height="16"><path d="M4.500 6.500h10v6h-10zM15.500 8v3M2 1v3M5 1v3M1 4.500h5v2H3v3" /><path d="M6 8h7v3H6z" fill="#fff" /></svg>
      <svg viewBox="0 0 16 16" width="16" height="16"><path d="M2 12Q3 4 14 3M5 13q1-6 9-7M8 14q1-4 6-5M11 14q1-2 3-2M2 12l3 3" /></svg>
      <svg viewBox="0 0 16 16" width="16" height="16"><path d="M1 6h3l4-4v12L4 10H1zM10 6q1 2 0 4M12 4q2 4 0 8M14 2q3 6 0 12" /></svg>
      <svg viewBox="0 0 24 16" width="24" height="16"><path d="M1 2.500h22v11H1zM6 11.500h12" /><path d="M3 5.500h18M3 8.500h18" stroke-dasharray="2 1" /></svg>
      <span class="ime">中</span>
      <svg viewBox="0 0 16 16" width="16" height="16"><path d="M1 2l13-2 1 13-12 3z" fill="#f04e23" stroke="none" /><path d="M11.500 4Q5 3 5 6q0 1 3 1.500t3 2Q11 13 4.500 11.500" stroke-width="2" /></svg>
      <span class="pair clock"><span>14:31</span><span>2018/6/6</span></span>
      <button class="notes" aria-label="通知中心">
        <svg viewBox="0 0 24 28" width="24" height="28"><path d="M1 3h15v13H8l-3 3v-3H1z" fill="#fff" stroke="none" /><path d="M4 6.500h9M4 9.500h9M4 12.500h5" stroke="#000" /><circle cx="15.500" cy="18.500" r="7.500" fill="#2d2d2d" stroke="#888" /><text x="15.500" y="23" text-anchor="middle">1</text></svg>
      </button>
    </div>
  </div>

  <div class="callout"></div>
  <div class="badge">72</div>
  <div class="imebar">
    <svg class="sogou" viewBox="0 0 28 26" width="28" height="26"><path d="M1 5L22 0q3 0 4 3l2 16q0 3-3 4L8 26q-3 0-4-3L0 8q0-2 1-3z" fill="#ee4a1c" /><path d="M21 6Q8 3 8 9q0 3 6 3.500t6 4.500q0 5-13 2.500" fill="none" stroke="#fff" stroke-width="4" /></svg>
    <span class="zh">中</span>
    <svg viewBox="0 0 16 16"><circle cx="5" cy="5" r="2" fill="none" stroke="#2070c0" stroke-width="1.500" /><path d="M11 8h3v3q0 3-3 3 2-1 1-3h-1z" fill="#2070c0" /></svg>
    <svg viewBox="0 0 16 16"><circle cx="8" cy="8" r="7" fill="none" stroke="#2070c0" stroke-width="1.500" /><path d="M5 5v2M11 5v2M4 9q4 6 8 0z" fill="none" stroke="#2070c0" stroke-width="1.500" /></svg>
    <svg viewBox="0 0 16 16"><rect x="5" y="0" width="6" height="10" rx="3" fill="#2070c0" /><path d="M3 7q0 5 5 5t5-5M8 12v3M5 15.500h6" fill="none" stroke="#2070c0" stroke-width="1.500" /></svg>
    <svg viewBox="0 0 16 16"><rect x=".7" y="2.700" width="14.600" height="11" rx="1" fill="none" stroke="#2070c0" stroke-width="1.400" /><path d="M3 6h10M3 8.500h10" stroke="#2070c0" stroke-width="1.500" stroke-dasharray="2 1" /><path d="M5 11.500h6" stroke="#2070c0" stroke-width="1.500" /></svg>
    <svg viewBox="0 0 16 16"><circle cx="6" cy="4" r="3.500" fill="#b4bcc8" /><path d="M0 14q0-6 6-6 3 0 4 2H6v4z" fill="#b4bcc8" /><rect x="7" y="9.500" width="8.500" height="6" fill="#fff" stroke="#b4bcc8" /><path d="M9 12h1M12 11v3" stroke="#b4bcc8" /></svg>
    <svg viewBox="0 0 16 16"><path d="M5 1l-5 3 1 4 3-1v8h8V7l3 1 1-4-5-3q-3 3-6 0z" fill="#2070c0" /></svg>
    <svg viewBox="0 0 16 16"><path d="M2 14l7-7" stroke="#2070c0" stroke-width="3" stroke-linecap="round" /><path d="M14 3l-3 2-1-1 2-3q-4 0-4.500 3T10 9q5 0 5-4z" fill="#2070c0" /></svg>
  </div>
</div>

<style>
  :global(body) {
    background: #efefef;
  }

  .window {
    position: relative;
    display: flex;
    flex-direction: column;
    min-height: 100vh;
    overflow: hidden;
    background: #efefef;
    color: #000;
    font: 12px/16px "Noto Sans", "Noto Sans CJK SC", sans-serif;
  }

  button,
  input,
  select {
    font: inherit;
    color: inherit;
    border: 0;
    padding: 0;
    margin: 0;
    background: none;
    border-radius: 0;
  }

  button {
    white-space: nowrap;
  }

  h1,
  h2,
  ul {
    margin: 0;
    padding: 0;
    font: inherit;
    list-style: none;
  }

  svg {
    flex: none;
  }

  .song {
    font-family: "Liberation Serif", serif;
  }

  .icon {
    width: 16px;
    height: 16px;
  }

  .caret {
    width: 5px;
    height: 3px;
  }

  .titlebar {
    display: flex;
    align-items: center;
    height: 23px;
    padding-left: 2px;
    background: #fff;
  }

  h1 {
    flex: 1;
    margin-left: 5px;
    white-space: nowrap;
  }

  .winbtns {
    display: flex;
    padding-right: 2px;
  }

  .winbtns button {
    width: 46px;
    height: 22px;
  }

  .winbtns svg {
    width: 11px;
    height: 11px;
    fill: none;
    stroke: #000;
  }

  .menubar {
    display: flex;
    align-items: center;
    height: 30px;
  }

  .menus {
    display: flex;
    gap: 11px;
    padding: 0 7px;
  }

  .group {
    display: flex;
    align-items: center;
    height: 28px;
    border-radius: 3px;
    background: linear-gradient(#fcfcfc, #f0f0f0);
  }

  .tip {
    flex: 1;
    justify-content: center;
    margin: 0 2px 0 3px;
  }

  .tip a {
    color: #00696b;
    text-decoration: none;
    white-space: nowrap;
  }

  .account {
    flex: 0 0 239px;
  }

  .account .plain {
    margin: 0 4px;
  }

  .more {
    align-self: flex-start;
    margin: 4px 4px 0 auto;
    line-height: 0;
    width: 8px;
    height: 6px;
  }

  .more path {
    fill: none;
    stroke: #000;
    stroke-width: 1.3;
  }

  .bar {
    display: flex;
  }

  .top {
    gap: 3px;
    padding: 1px 1px 2px;
  }

  .file {
    flex: 0 0 148px;
    padding-left: 1px;
  }

  .main {
    flex: 0 0 549px;
    box-sizing: border-box;
    padding-left: 2px;
  }

  .view {
    flex: 1;
    min-width: 0;
  }

  .tool {
    display: flex;
    align-items: center;
    gap: 4px;
    height: 24px;
    padding: 0 4px 0 3px;
    flex: none;
  }

  .view .tool {
    padding-right: 3px;
  }

  .tool.split .caret {
    margin: 0 2px 0 3px;
  }

  .tool.on {
    box-sizing: border-box;
    border: 1px solid #0078d7;
    padding: 0 3px 0 2px;
    background: #dceaf6;
    height: 23px;
  }

  .tool.off {
    color: #8c8c8c;
  }

  .tool.field {
    background: #fff;
  }

  .rowtools .tool:not(:has(span)) {
    padding: 0 4px;
  }

  .sep {
    width: 1px;
    height: 14px;
    margin: 0 2px 0 3px;
    background: #b4b4b4;
    flex: none;
  }

  .rowtools .sep {
    margin: 0 1px;
  }

  .grip {
    width: 3px;
    height: 15px;
    margin-left: 2px;
    background: repeating-linear-gradient(#b0b0b0 0 2px, transparent 2px 4px);
    flex: none;
  }

  .combo {
    display: flex;
    height: 22px;
    margin-left: 2px;
    background: #fff;
    flex: none;
  }

  .combo select {
    appearance: none;
    flex: 1;
    min-width: 0;
    padding-left: 2px;
  }

  .drop {
    display: grid;
    place-items: center;
    width: 12px;
    background: #f7f7f7;
  }

  .c55 {
    width: 55px;
  }

  .c58 {
    width: 58px;
  }

  .c70 {
    width: 70px;
  }

  .body {
    display: flex;
    flex: 1;
  }

  aside {
    display: flex;
    flex-direction: column;
    flex: 0 0 254px;
    box-sizing: border-box;
    padding-bottom: 2px;
    border-right: 1px solid #a0a0a0;
    font-family: "Noto Sans CJK SC", sans-serif;
  }

  .panel-title {
    display: flex;
    align-items: center;
    gap: 10px;
    height: 15px;
    margin-bottom: 2px;
    padding-right: 4px;
    background: #0054e3;
    color: #fff;
  }

  .panel-title h2 {
    flex: 1;
    font-size: 13px;
  }

  .panel-title path {
    fill: none;
    stroke: #fff;
  }

  .section {
    height: 22px;
    box-sizing: border-box;
    border: 1px solid #a0a0a0;
    border-top-color: #fff;
    box-shadow: 0 -1px #a0a0a0;
    background: #f0f0f0;
    flex: none;
  }

  .expanders {
    display: flex;
    align-items: center;
    gap: 6px;
    height: 27px;
    padding-left: 7px;
    background: linear-gradient(#fdfdfd, #f0f0f0);
  }

  .expanders button {
    line-height: 0;
  }

  .edge {
    stroke: #001818;
    stroke-width: 3;
  }

  .fill {
    stroke: #00a0a0;
  }

  .treebox {
    display: flex;
    flex: 1 0 0;
    min-height: 0;
    box-sizing: border-box;
    margin: 0 0 2px 2px;
    border: 1px solid #828790;
    background: #fff;
    overflow: hidden;
  }

  .treebox ul {
    flex: 1;
    padding-top: 1px;
    height: 0;
  }

  li {
    display: flex;
    align-items: center;
    height: 16px;
  }

  .rails {
    width: 23px;
    height: 16px;
    fill: none;
  }

  .rails.leaf {
    width: 43px;
  }

  .dots {
    stroke: #808080;
    stroke-dasharray: 1 1;
  }

  .chev {
    stroke: #444;
    stroke-width: 1.6;
  }

  .name {
    padding: 0 4px 0 3px;
    white-space: nowrap;
  }

  .selected {
    background: #d9d9d9;
  }

  .vscroll {
    display: flex;
    flex-direction: column;
    align-items: center;
    width: 15px;
    margin-right: 2px;
    padding: 7px 0;
    background: #f0f0f0;
  }

  .vscroll path,
  .hscroll path {
    fill: none;
    stroke: #555;
    stroke-width: 1.6;
  }

  .vscroll .thumb {
    width: 15px;
    flex: 0 0 47%;
    margin: 85px 0 auto;
    background: #cdcdcd;
  }

  main {
    display: flex;
    flex-direction: column;
    flex: 1;
    min-width: 0;
    margin-left: 5px;
  }

  .edit,
  .part,
  .draw {
    padding-left: 3px;
  }

  .edit .group,
  .part .group,
  .draw .group {
    height: 26px;
    padding-right: 3px;
  }

  .part {
    padding-top: 1px;
    margin-bottom: 2px;
  }

  .draw {
    padding-top: 2px;
    margin-bottom: 1px;
  }

  .axis {
    margin-left: 72px;
  }

  .axis .grip {
    margin-right: 1px;
  }

  .stub {
    margin-left: 2px;
    width: 24px;
  }

  .arcmenu {
    display: grid;
    place-items: center;
    width: 9px;
    height: 22px;
  }

  .cad {
    display: block;
    width: 100%;
    height: 305px;
    background: #000;
    shape-rendering: crispEdges;
  }

  .wall {
    fill: #f0f000;
  }

  .red {
    stroke: #f00;
  }

  .green {
    stroke: #008000;
    fill: none;
  }

  .cad text {
    fill: #e4e4e4;
    font: 15px "Liberation Sans", sans-serif;
  }

  .yaxis {
    fill: #0f0;
  }

  .xaxis {
    fill: #f00;
  }

  .ymark {
    fill: none;
    stroke: #0f0;
  }

  .xmark {
    fill: none;
    stroke: #f00;
  }

  .snap {
    gap: 1px;
    padding: 1px 0 1px 213px;
  }

  .snap .group {
    padding-right: 2px;
  }

  .snap .grip {
    margin-right: 1px;
  }

  .snap .combo {
    margin-left: 1px;
  }

  .snap label {
    white-space: nowrap;
  }

  .unit {
    color: #6d6d6d;
    padding: 0 1px;
  }

  .gap {
    margin-left: 3px;
  }

  .spin {
    display: flex;
    align-items: center;
    box-sizing: border-box;
    width: 58px;
    height: 24px;
    margin: 0 1px;
    padding-right: 3px;
    border: 1px solid #7a7a7a;
    color: #6d6d6d;
  }

  .spin.wide {
    width: 69px;
    margin-left: 4px;
  }

  .spin input {
    flex: 1;
    min-width: 0;
    padding-right: 10px;
    text-align: right;
  }

  .spin path {
    fill: #555;
  }

  .snap input[type="checkbox"] {
    appearance: none;
    width: 11px;
    height: 11px;
    margin: 0 9px 0 1px;
    border: 1px solid #aaa;
    box-sizing: border-box;
  }

  .editor {
    display: flex;
    flex: 1;
    padding: 2px 0;
  }

  .strip {
    display: flex;
    flex-direction: column;
    align-items: center;
    width: 12px;
  }

  .strip button {
    margin: 1px 0 7px;
    line-height: 0;
  }

  .strip rect {
    fill: #f0c8c0;
    stroke: #533;
  }

  .strip path {
    stroke: #222;
  }

  .dotgrid {
    flex: 1;
    width: 8px;
    background: radial-gradient(circle at 1px 1px, #b8b8b8 1px, transparent 2px) 0 0 / 4px 5px;
  }

  .sheet {
    display: flex;
    flex-direction: column;
    flex: 1;
    min-width: 0;
    padding-right: 1px;
  }

  .rowtools .plain {
    margin: 0 7px 0 4px;
  }

  .total {
    padding-left: 5px;
  }

  .grid {
    display: flex;
    flex-direction: column;
    flex: 1;
    overflow: hidden;
    border: 1px solid #a0a0a0;
    background: #fff;
    font-family: "Noto Sans CJK SC", sans-serif;
  }

  table {
    table-layout: fixed;
    width: 0;
    border-collapse: collapse;
  }

  .rowno {
    width: 33px;
  }

  th,
  td {
    height: 18px;
    padding: 0;
    border: solid #b8b8b8;
    border-width: 0 1px 1px 0;
    font-weight: normal;
    white-space: nowrap;
    overflow: hidden;
  }

  thead th {
    height: 17px;
    padding-top: 2px;
    background: linear-gradient(#fff, #ececec);
  }

  thead th.current {
    background: linear-gradient(#f9dcae, #f2bd5c);
    color: #600060;
  }

  td.current {
    background: #d9eaf8;
  }

  td.cursor {
    border-right-color: #000;
  }

  th.mark {
    background: #ffd58c;
    color: #600060;
  }

  .hscroll {
    display: flex;
    align-items: center;
    gap: 6px;
    height: 15px;
    margin-top: auto;
    padding: 0 6px;
    background: #f0f0f0;
    margin-bottom: 1px;
  }

  .track {
    flex: 1;
  }

  .hscroll .thumb {
    display: block;
    width: 67%;
    height: 15px;
    background: #cdcdcd;
  }

  .status {
    display: flex;
    gap: 2px;
    height: 20px;
    padding-top: 1px;
    background: #fff;
    font-family: "Noto Sans CJK SC", sans-serif;
  }

  .status > span {
    box-sizing: border-box;
    height: 19px;
    padding-left: 1px;
    border: 1px solid #d4d4d4;
    background: linear-gradient(#fff, #f0f0f0);
    line-height: 17px;
    white-space: nowrap;
  }

  .s148 {
    width: 148px;
  }

  .s80 {
    width: 78px;
  }

  .s98 {
    width: 98px;
  }

  .s50 {
    width: 48px;
  }

  .s70 {
    width: 70px;
  }

  .hint {
    flex: 1;
  }

  .taskbar {
    display: flex;
    height: 40px;
    background: #030c10;
    color: #fff;
  }

  .start {
    width: 48px;
    background: #000;
  }

  .search {
    display: flex;
    align-items: center;
    width: 344px;
    box-sizing: border-box;
    padding: 0 14px 0 9px;
    background: #333;
  }

  .search circle {
    fill: none;
    stroke: #fff;
    stroke-width: 2.4;
  }

  .search input {
    flex: 1;
    margin-left: 5px;
    font-size: 14px;
  }

  .search input::placeholder {
    color: #a0a0a0;
    opacity: 1;
  }

  .mic {
    fill: none;
    stroke: #b0b0b0;
  }

  .pin {
    width: 50px;
  }

  .running {
    display: flex;
    margin-left: 2px;
  }

  .task {
    width: 48px;
    border-bottom: 2px solid transparent;
    padding-top: 2px;
  }

  .task.run {
    border-image: linear-gradient(90deg, transparent 4px, #76b9ed 4px 44px, transparent 44px) 2;
  }

  .task.active {
    background: #3a4347;
    border-image: none;
    border-bottom-color: #76b9ed;
  }

  .pin svg,
  .task svg {
    width: 24px;
    height: 24px;
    vertical-align: middle;
  }

  .tray {
    display: flex;
    align-items: center;
    justify-content: flex-end;
    flex: 1;
    gap: 8px;
  }

  .tray svg {
    fill: none;
    stroke: #fff;
  }

  .links {
    margin-right: 12px;
  }

  .pair {
    display: flex;
    flex-direction: column;
    align-items: center;
    line-height: 18px;
  }

  .cpu {
    margin-right: 8px;
  }

  .ime {
    margin: 0 4px 0 3px;
  }

  .clock {
    margin: 0 13px 0 14px;
  }

  .notes {
    width: 38px;
    margin-right: 5px;
    padding-right: 7px;
    border-right: 1px solid #444;
    height: 40px;
  }

  .notes svg {
    vertical-align: middle;
  }

  .notes text {
    fill: #fff;
    stroke: none;
    font-size: 12px;
  }

  .callout {
    position: absolute;
    left: 428px;
    top: 132px;
    width: 150px;
    height: 33px;
    border: 7px solid #f00;
  }

  .badge {
    position: absolute;
    left: 1012px;
    top: -29px;
    width: 44px;
    height: 44px;
    border: 2px solid #d8dcd8;
    border-radius: 50%;
    background: linear-gradient(#36a84c, #4cc962);
    box-shadow: 0 2px 5px rgb(0 0 0 / 50%);
    color: #fff;
    font-weight: bold;
    line-height: 68px;
    text-align: center;
  }

  .imebar {
    position: absolute;
    left: 696px;
    top: 14px;
    display: flex;
    align-items: center;
    gap: 6px;
    width: 198px;
    height: 22px;
    border: 1px solid #a8c4e0;
    background: #fff;
  }

  .imebar svg {
    width: 16px;
    height: 16px;
  }

  .imebar .sogou {
    width: 28px;
    height: 26px;
    margin: 0 -2px 0 -7px;
  }

  .zh {
    width: 16px;
    color: #2070c0;
    font-size: 15px;
    font-weight: bold;
    line-height: 20px;
  }
</style>
